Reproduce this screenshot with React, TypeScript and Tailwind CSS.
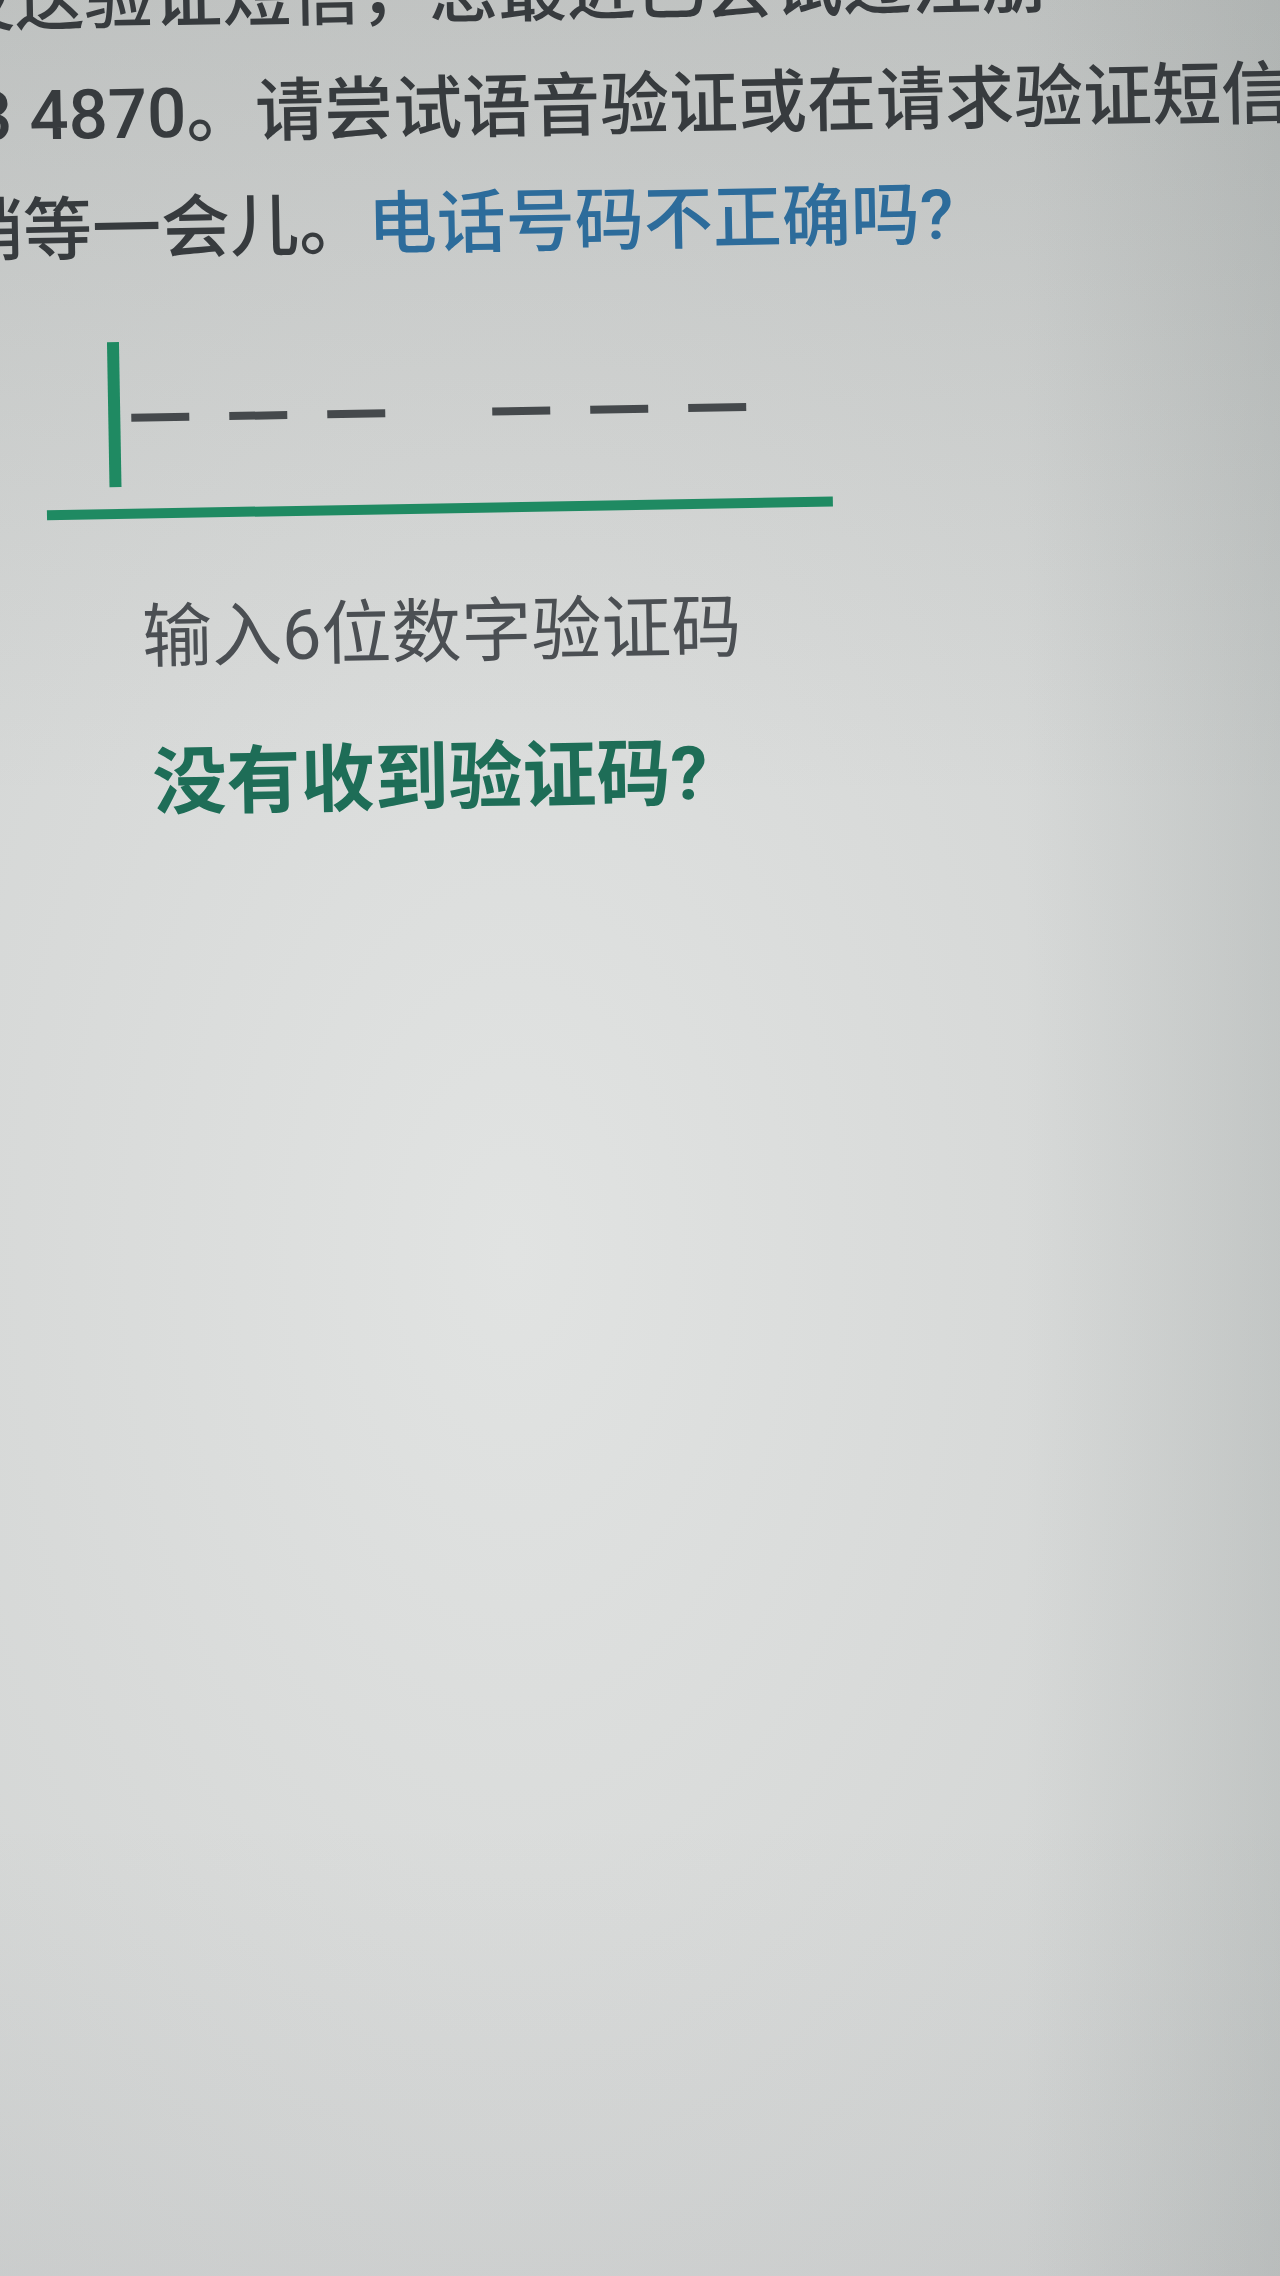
export default function App() {
  return (
    <div className="relative h-[2276px] w-full overflow-hidden bg-[linear-gradient(to_right,rgba(0,0,0,0)_80%,rgba(120,128,126,0.18)_100%),linear-gradient(to_bottom,rgba(110,114,112,0.18)_0%,rgba(0,0,0,0)_35%,rgba(0,0,0,0)_80%,rgba(110,110,118,0.08)_100%),radial-gradient(ellipse_at_40%_55%,#e1e3e2_0%,#d8dad9_45%,#cdd0cf_100%)] font-['Roboto','Noto_Sans_CJK_SC',sans-serif]">
      <div className="origin-top-left -rotate-1">
        {/* message */}
        <div className="-mt-[56px] text-[69px] leading-[115px] font-medium text-[#373b3e] whitespace-nowrap">
          <div className="-ml-[55px]">发送验证短信，您最近已尝试过注册</div>
          <div className="-ml-[30px]">3 4870。请尝试语音验证或在请求验证短信前</div>
          <div className="-ml-[51px]">
            稍等一会儿。<span className="text-[#2d6c9b]">电话号码不正确吗?</span>
          </div>
        </div>

        {/* code input */}
        <div className="mt-[55px] ml-[100px] flex h-[145px] w-[700px] items-center">
          <div className="h-full w-[12px] bg-[#1f8a62]" />
          <div className="ml-[11px] flex items-center gap-[40px] pt-[6px]">
            <div className="h-[8px] w-[58px] bg-[#45494c]" />
            <div className="h-[8px] w-[58px] bg-[#45494c]" />
            <div className="h-[8px] w-[58px] bg-[#45494c]" />
            <div className="ml-[67px] h-[8px] w-[58px] bg-[#45494c]" />
            <div className="h-[8px] w-[58px] bg-[#45494c]" />
            <div className="h-[8px] w-[58px] bg-[#45494c]" />
          </div>
        </div>
        <div className="mt-[22px] ml-[37px] h-[10px] w-[786px] bg-[#1f8a62]" />

        <div className="mt-[75px] ml-[130px] text-[70px] leading-[88px] text-[#4b4f53] whitespace-nowrap">
          输入6位数字验证码
        </div>
        <div className="mt-[56px] ml-[138px] text-[74px] leading-[92px] font-bold text-[#1e6d57] whitespace-nowrap">
          没有收到验证码?
        </div>
      </div>
    </div>
  );
}
